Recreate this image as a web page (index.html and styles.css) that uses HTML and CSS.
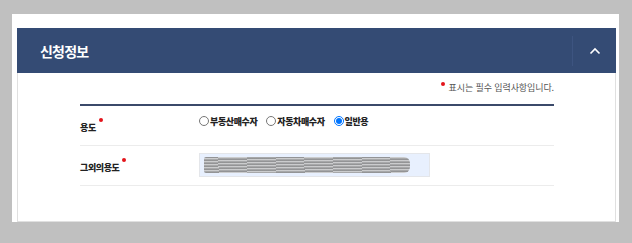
FILE: index.html
```html
<!DOCTYPE html>
<html lang="ko">
<head>
    <meta charset="UTF-8">
    <title>신청정보</title>
    <link rel="stylesheet" href="styles.css">
</head>
<body>
    <div class="page">
        <div class="section">
            <div class="section-head">
                <h2>신청정보</h2>
                <button class="toggle-btn" type="button">
                    <svg width="12" height="8" viewBox="0 0 12 8"><path d="M1.5 6.5 L6 2 L10.5 6.5" fill="none" stroke="#fff" stroke-width="1.6"/></svg>
                </button>
            </div>

            <div class="section-body">
                <p class="notice"><span class="req"></span> 표시는 필수 입력사항입니다.</p>

                <div class="form-table">
                    <div class="form-row">
                        <div class="label">용도<span class="req"></span></div>
                        <div class="field radios">
                            <label><input type="radio" name="use"> 부동산매수자</label>
                            <label><input type="radio" name="use"> 자동차매수자</label>
                            <label><input type="radio" name="use" checked> 일반용</label>
                        </div>
                    </div>
                    <div class="form-row">
                        <div class="label">그외의용도<span class="req"></span></div>
                        <div class="field">
                            <div class="input-box"><span class="scribble"></span></div>
                        </div>
                    </div>
                </div>
            </div>
        </div>
    </div>
</body>
</html>
```

FILE: styles.css
```css
* {
    margin: 0;
    padding: 0;
    box-sizing: border-box;
    font-family: 'Noto Sans CJK KR', 'Noto Sans', sans-serif;
}

body {
    background-color: #c0c0c0;
}

.page {
    margin: 14px 13px 0 12px;
    height: 208px;
    background-color: #fff;
    padding: 14px 3px 0 5px;
    overflow: hidden;
}

.section {
    border: 1px solid #e0e0e0;
    border-top: none;
    height: 100%;
}

.section-head {
    display: flex;
    align-items: center;
    justify-content: space-between;
    height: 45px;
    margin: 0 -1px;
    background-color: #344b74;
}

.section-head h2 {
    padding-left: 23px;
    color: #fff;
    font-size: 14px;
    font-weight: 700;
    letter-spacing: -0.8px;
}

.toggle-btn {
    display: flex;
    align-items: center;
    justify-content: center;
    width: 44px;
    height: 30px;
    background: none;
    border: none;
    border-left: 1px solid #3d5480;
    cursor: pointer;
}

.section-body {
    padding: 0 61px 0 62px;
}

.notice {
    height: 31px;
    padding-top: 8px;
    text-align: right;
    font-size: 9px;
    color: #555;
    letter-spacing: -0.1px;
}

.notice .req {
    margin: 0 1px 0 0;
    vertical-align: 5px;
}

.req {
    display: inline-block;
    width: 4px;
    height: 4px;
    margin-left: 3px;
    border-radius: 50%;
    background-color: #e3141b;
    vertical-align: 9px;
}

.form-table {
    border-top: 2px solid #3b4a6a;
}

.form-row {
    display: flex;
    align-items: center;
    height: 40px;
    border-bottom: 1px solid #ececec;
}

.label {
    width: 119px;
    font-size: 9px;
    font-weight: 900;
    color: #222;
    letter-spacing: -0.4px;
}

.radios {
    display: flex;
    gap: 9px;
    margin-top: -9px;
}

.radios label {
    display: flex;
    align-items: center;
    font-size: 9px;
    font-weight: 900;
    color: #222;
    letter-spacing: -0.4px;
}

.radios input {
    width: 10px;
    height: 10px;
    margin: 0 1px 0 0;
}

.input-box {
    display: flex;
    align-items: center;
    width: 231px;
    height: 24px;
    margin-top: -1px;
    padding-left: 4px;
    background-color: #e8f0fe;
    border: 1px solid #e4e6ea;
}

.scribble {
    display: block;
    width: 206px;
    height: 16px;
    border-radius: 2px 6px 6px 2px;
    background: repeating-linear-gradient(178deg, #8a8a8a 0 1px, #c8c8c8 1px 2px, #a0a0a0 2px 3px);
    opacity: 0.9;
}
```
